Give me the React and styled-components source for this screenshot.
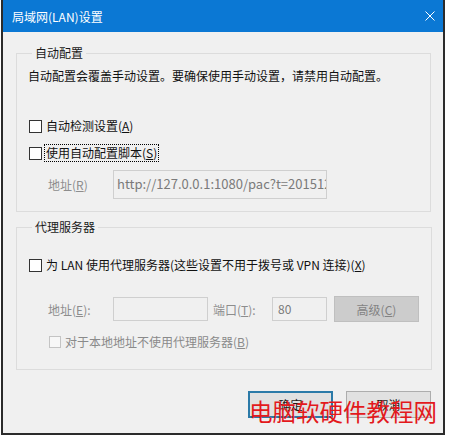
import React from 'react';
import styled, { createGlobalStyle } from 'styled-components';

const GlobalStyle = createGlobalStyle`
  html, body {
    margin: 0;
    padding: 0;
    background: #ffffff;
  }
  body {
    font-family: "Segoe UI", "Noto Sans CJK SC", "Noto Sans", sans-serif;
    font-size: 12px;
    color: #1a1a1a;
  }
`;

const Window = styled.div`
  position: relative;
  box-sizing: border-box;
  margin-left: 1px;
  width: 444px;
  height: 435px;
  border: 2px solid #2b2b2b;
  border-top: none;
  background: #f0f0f0;
  display: flex;
  flex-direction: column;
`;

const TitleBar = styled.div`
  height: 32px;
  background: #0b78d4;
  display: flex;
  align-items: center;
  justify-content: space-between;
  padding: 0 8px 0 9px;
  color: #ffffff;
  font-size: 12px;
`;

const CloseIcon = styled.svg`
  width: 10px;
  height: 10px;
`;

const Content = styled.div`
  flex: 1;
  display: flex;
  flex-direction: column;
  padding: 13px 12px 0 13px;
`;

const Group = styled.fieldset`
  margin: ${(p) => p.$top || 0}px 0 0 0;
  padding: 0 12px ${(p) => p.$bottom || 12}px 11px;
  border: 1px solid #dcdcdc;
  display: flex;
  flex-direction: column;
`;

const Legend = styled.legend`
  margin-left: 4px;
  padding: 0 3px;
  line-height: 16px;
  font-size: 12px;
  color: #1a1a1a;
`;

const Description = styled.div`
  margin-top: 7px;
  line-height: 16px;
  color: #111111;
`;

const CheckRow = styled.label`
  display: flex;
  align-items: center;
  height: 18px;
  margin-top: ${(p) => p.$top || 0}px;
  margin-left: ${(p) => p.$indent || 1}px;
  color: ${(p) => (p.$disabled ? '#8a8a8a' : '#111111')};
`;

const Box = styled.span`
  box-sizing: border-box;
  width: ${(p) => (p.$disabled ? 12 : 13)}px;
  height: ${(p) => (p.$disabled ? 12 : 13)}px;
  border: 1px solid ${(p) => (p.$disabled ? '#c4c4c4' : '#333333')};
  background: ${(p) => (p.$disabled ? '#f7f7f7' : '#ffffff')};
  margin-right: 2px;
  flex: none;
`;

const CheckText = styled.span`
  padding: 0 1px;
  line-height: 16px;
  border: 1px dotted ${(p) => (p.$focus ? '#000000' : 'transparent')};
`;

const FieldRow = styled.div`
  display: flex;
  align-items: center;
  margin-top: ${(p) => p.$top || 0}px;
  margin-left: 20px;
`;

const FieldLabel = styled.span`
  box-sizing: border-box;
  color: #8d8d8d;
  width: ${(p) => p.$width}px;
  padding-left: ${(p) => p.$pad || 0}px;
  flex: none;
`;

const TextBox = styled.div`
  box-sizing: border-box;
  width: ${(p) => p.$width}px;
  height: ${(p) => p.$height}px;
  border: 1px solid #cfcfcf;
  background: #f0f0f0;
  color: #7a7a7a;
  font-size: ${(p) => p.$font || 12}px;
  padding: ${(p) => (p.$tall ? '3px 0 0 3px' : '2px 0 0 5px')};
  white-space: nowrap;
  overflow: hidden;
  flex: none;
`;

const AdvancedButton = styled.div`
  box-sizing: border-box;
  margin-left: 7px;
  width: 85px;
  height: 26px;
  border: 1px solid #bfbfbf;
  background: #cccccc;
  color: #838383;
  display: flex;
  align-items: center;
  justify-content: center;
`;

const ButtonBar = styled.div`
  display: flex;
  justify-content: flex-end;
  gap: 13px;
  margin-top: 21px;
`;

const Button = styled.div`
  box-sizing: border-box;
  width: 85px;
  height: 27px;
  border: ${(p) => (p.$primary ? '2px solid #2b7aa8' : '1px solid #adadad')};
  background: #e1e1e1;
  display: flex;
  align-items: center;
  justify-content: center;
  color: #1a1a1a;
`;

const Watermark = styled.div`
  position: absolute;
  left: 246px;
  top: 397px;
  font-family: "Noto Sans CJK SC", sans-serif;
  font-size: 23.5px;
  line-height: 28px;
  color: #e3191c;
  white-space: nowrap;
  pointer-events: none;
`;

export default function App() {
  return (
    <>
      <GlobalStyle />
      <Window>
        <TitleBar>
          <span>局域网(LAN)设置</span>
          <CloseIcon viewBox="0 0 10 10">
            <path d="M0.5 0.5 L9.5 9.5 M9.5 0.5 L0.5 9.5" stroke="#ffffff" strokeWidth="1" fill="none" />
          </CloseIcon>
        </TitleBar>
        <Content>
          <Group>
            <Legend>自动配置</Legend>
            <Description>自动配置会覆盖手动设置。要确保使用手动设置，请禁用自动配置。</Description>
            <CheckRow $top={33}>
              <Box />
              <CheckText>自动检测设置(<u>A</u>)</CheckText>
            </CheckRow>
            <CheckRow $top={9}>
              <Box />
              <CheckText $focus>使用自动配置脚本(<u>S</u>)</CheckText>
            </CheckRow>
            <FieldRow $top={8}>
              <FieldLabel $width={65}>地址(<u>R</u>)</FieldLabel>
              <TextBox $width={214} $height={29} $font={13} $tall>
                http://127.0.0.1:1080/pac?t=2015122
              </TextBox>
            </FieldRow>
          </Group>
          <Group $top={7} $bottom={18}>
            <Legend>代理服务器</Legend>
            <CheckRow $top={21}>
              <Box />
              <CheckText>为 LAN 使用代理服务器(这些设置不用于拨号或 VPN 连接)(<u>X</u>)</CheckText>
            </CheckRow>
            <FieldRow $top={22}>
              <FieldLabel $width={65}>地址(<u>E</u>):</FieldLabel>
              <TextBox $width={95} $height={24} />
              <FieldLabel $width={64} $pad={5}>端口(<u>T</u>):</FieldLabel>
              <TextBox $width={55} $height={24}>80</TextBox>
              <AdvancedButton>高级(<u>C</u>)</AdvancedButton>
            </FieldRow>
            <CheckRow $top={11} $indent={21} $disabled>
              <Box $disabled />
              <CheckText>对于本地地址不使用代理服务器(<u>B</u>)</CheckText>
            </CheckRow>
          </Group>
          <ButtonBar>
            <Button $primary>确定</Button>
            <Button>取消</Button>
          </ButtonBar>
        </Content>
        <Watermark>电脑软硬件教程网</Watermark>
      </Window>
    </>
  );
}
